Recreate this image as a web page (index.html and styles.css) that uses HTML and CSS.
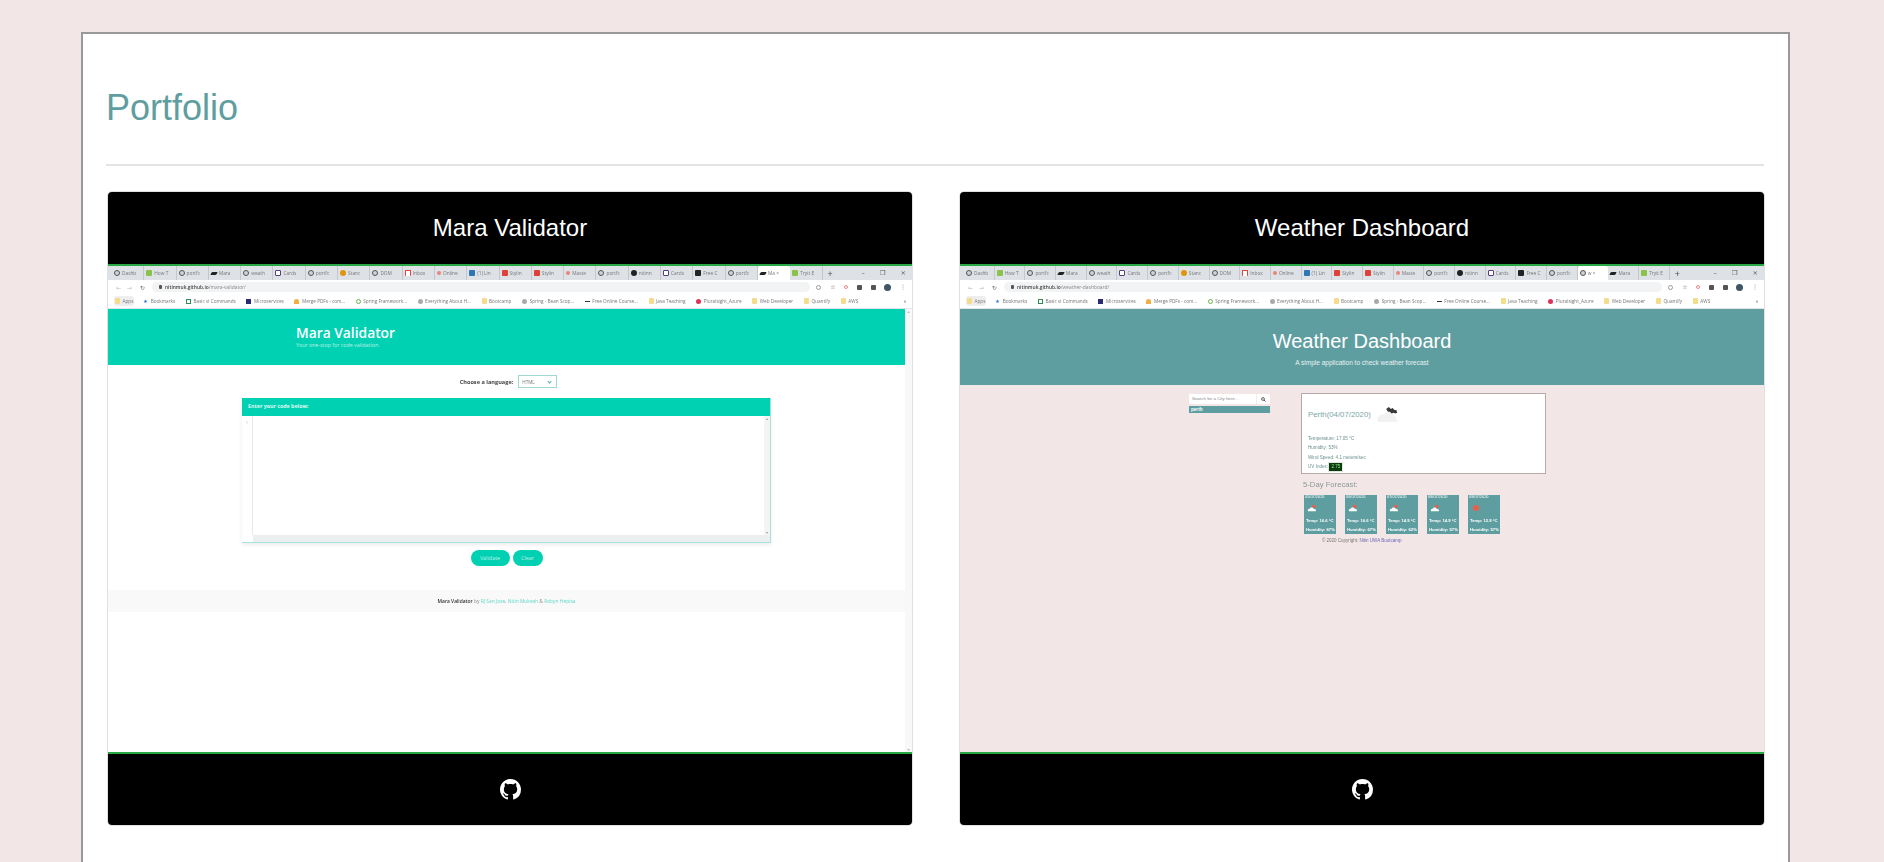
FILE: index.html
```html
<!DOCTYPE html>
<html lang="en">
<head>
<meta charset="utf-8">
<title>Portfolio</title>
<link rel="stylesheet" href="styles.css">
</head>
<body>
<main class="portfolio">
  <h1 class="portfolio-title">Portfolio</h1>
  <hr class="rule">
  <section class="projects">

    <article class="card">
      <header class="card-head"><h2>Mara Validator</h2></header>
      <div class="shot">
        <div class="tabs tabs-mara">
          <span class="tab"><i class="fav globe"></i>Dashb</span><span class="tab"><i class="fav sheet"></i>How T</span><span class="tab"><i class="fav globe"></i>portfc</span><span class="tab"><i class="fav dog"></i>Mara</span><span class="tab"><i class="fav globe"></i>weath</span><span class="tab"><i class="fav cards"></i>Cards</span><span class="tab"><i class="fav globe"></i>portfc</span><span class="tab"><i class="fav stan"></i>Stanc</span><span class="tab"><i class="fav globe"></i>DOM</span><span class="tab"><i class="fav mail"></i>Inbox</span><span class="tab"><i class="fav online"></i>Online</span><span class="tab"><i class="fav linked"></i>(1) Lin</span><span class="tab"><i class="fav red"></i>Stylin</span><span class="tab"><i class="fav red"></i>Stylin</span><span class="tab"><i class="fav online"></i>Maste</span><span class="tab"><i class="fav globe"></i>portfc</span><span class="tab"><i class="fav gh"></i>nitinn</span><span class="tab"><i class="fav cards"></i>Cards</span><span class="tab"><i class="fav free"></i>Free C</span><span class="tab"><i class="fav globe"></i>portfc</span><span class="tab active"><i class="fav dog"></i>Ma ×</span><span class="tab"><i class="fav sheet"></i>Tryit E</span>
          <span class="new-tab">+</span>
          <span class="window-controls"><b>–</b><b>❐</b><b>×</b></span>
        </div>
        <div class="address">
          <span class="nav">←</span><span class="nav">→</span><span class="nav dark">↻</span>
          <span class="omnibox"><i class="lock"></i><strong>nitinmuk.github.io</strong>/mara-validator/</span>
          <span class="tools"><i class="tool-search"></i><i class="tool-star">☆</i><i class="tool-red"></i><i class="tool-ext"></i><i class="tool-ext"></i><i class="avatar"></i><i class="tool-menu">⋮</i></span>
        </div>
        <div class="bookmarks">
          <span class="apps"><i class="mark folder"></i>Apps</span><span><i class="mark star">★</i>Bookmarks</span><span><i class="mark cs"></i>Basic vi Commands</span><span><i class="mark micro"></i>Microservices</span><span><i class="mark pdf"></i>Merge PDFs - com...</span><span><i class="mark spring"></i>Spring Framework...</span><span><i class="mark about"></i>Everything About H...</span><span><i class="mark folder"></i>Bootcamp</span><span><i class="mark about"></i>Spring - Bean Scop...</span><span><i class="mark dash"></i>Free Online Course...</span><span><i class="mark folder"></i>Java Teaching</span><span><i class="mark plural"></i>Pluralsight_Azure</span><span><i class="mark folder"></i>Web Developer</span><span><i class="mark folder"></i>Quantify</span><span><i class="mark folder"></i>AWS</span>
          <span class="more">»</span>
        </div>
        <div class="mara-page">
          <div class="mara-main">
            <div class="mara-hero">
              <p class="mara-name">Mara Validator</p>
              <p class="mara-tag">Your one-stop for code validation.</p>
            </div>
            <div class="lang-row"><label>Choose a language:</label><span class="lang-select">HTML<i class="chev"></i></span></div>
            <div class="editor">
              <div class="editor-head">Enter your code below:</div>
              <div class="editor-body">
                <div class="gutter">1</div>
                <div class="code-area"><div class="code-text"></div><div class="v-scroll"><i>▴</i><i>▾</i></div></div>
              </div>
              <div class="h-scroll"></div>
            </div>
            <div class="actions"><span class="pill pill-validate">Validate</span><span class="pill pill-clear">Clear</span></div>
            <div class="mara-footer"><b>Mara Validator</b> by <a>RJ San Jose</a>, <a>Nitin Mukesh</a> &amp; <a>Robyn Hepisa</a></div>
          </div>
          <div class="page-scroll"><i>▴</i><i>▾</i></div>
        </div>
      </div>
      <footer class="card-foot">
        <svg class="github" viewBox="0 0 16 16" aria-label="GitHub"><path fill="#fff" d="M8 0C3.58 0 0 3.58 0 8c0 3.54 2.29 6.53 5.47 7.59.4.07.55-.17.55-.38 0-.19-.01-.82-.01-1.49-2.01.37-2.53-.49-2.69-.94-.09-.23-.48-.94-.82-1.13-.28-.15-.68-.52-.01-.53.63-.01 1.08.58 1.23.82.72 1.21 1.87.87 2.33.66.07-.52.28-.87.51-1.07-1.78-.2-3.64-.89-3.64-3.95 0-.87.31-1.59.82-2.15-.08-.2-.36-1.02.08-2.12 0 0 .67-.21 2.2.82.64-.18 1.32-.27 2-.27.68 0 1.36.09 2 .27 1.53-1.04 2.2-.82 2.2-.82.44 1.1.16 1.92.08 2.12.51.56.82 1.27.82 2.15 0 3.07-1.87 3.75-3.65 3.95.29.25.54.73.54 1.48 0 1.07-.01 1.93-.01 2.2 0 .21.15.46.55.38A8.013 8.013 0 0016 8c0-4.42-3.58-8-8-8z"/></svg>
      </footer>
    </article>

    <article class="card">
      <header class="card-head"><h2>Weather Dashboard</h2></header>
      <div class="shot">
        <div class="tabs tabs-weather">
          <span class="tab"><i class="fav globe"></i>Dashb</span><span class="tab"><i class="fav sheet"></i>How T</span><span class="tab"><i class="fav globe"></i>portfc</span><span class="tab"><i class="fav dog"></i>Mara</span><span class="tab"><i class="fav globe"></i>weath</span><span class="tab"><i class="fav cards"></i>Cards</span><span class="tab"><i class="fav globe"></i>portfc</span><span class="tab"><i class="fav stan"></i>Stanc</span><span class="tab"><i class="fav globe"></i>DOM</span><span class="tab"><i class="fav mail"></i>Inbox</span><span class="tab"><i class="fav online"></i>Online</span><span class="tab"><i class="fav linked"></i>(1) Lin</span><span class="tab"><i class="fav red"></i>Stylin</span><span class="tab"><i class="fav red"></i>Stylin</span><span class="tab"><i class="fav online"></i>Maste</span><span class="tab"><i class="fav globe"></i>portfc</span><span class="tab"><i class="fav gh"></i>nitinn</span><span class="tab"><i class="fav cards"></i>Cards</span><span class="tab"><i class="fav free"></i>Free C</span><span class="tab"><i class="fav globe"></i>portfc</span><span class="tab active"><i class="fav globe"></i>w ×</span><span class="tab"><i class="fav dog"></i>Mara</span><span class="tab"><i class="fav sheet"></i>Tryit E</span>
          <span class="new-tab">+</span>
          <span class="window-controls"><b>–</b><b>❐</b><b>×</b></span>
        </div>
        <div class="address">
          <span class="nav">←</span><span class="nav">→</span><span class="nav dark">↻</span>
          <span class="omnibox"><i class="lock"></i><strong>nitinmuk.github.io</strong>/weather-dashboard/</span>
          <span class="tools"><i class="tool-search"></i><i class="tool-star">☆</i><i class="tool-red"></i><i class="tool-ext"></i><i class="tool-ext"></i><i class="avatar"></i><i class="tool-menu">⋮</i></span>
        </div>
        <div class="bookmarks">
          <span class="apps"><i class="mark folder"></i>Apps</span><span><i class="mark star">★</i>Bookmarks</span><span><i class="mark cs"></i>Basic vi Commands</span><span><i class="mark micro"></i>Microservices</span><span><i class="mark pdf"></i>Merge PDFs - com...</span><span><i class="mark spring"></i>Spring Framework...</span><span><i class="mark about"></i>Everything About H...</span><span><i class="mark folder"></i>Bootcamp</span><span><i class="mark about"></i>Spring - Bean Scop...</span><span><i class="mark dash"></i>Free Online Course...</span><span><i class="mark folder"></i>Java Teaching</span><span><i class="mark plural"></i>Pluralsight_Azure</span><span><i class="mark folder"></i>Web Developer</span><span><i class="mark folder"></i>Quantify</span><span><i class="mark folder"></i>AWS</span>
          <span class="more">»</span>
        </div>
        <div class="weather-page">
          <div class="weather-hero">
            <p class="weather-name">Weather Dashboard</p>
            <p class="weather-tag">A simple application to check weather forecast</p>
          </div>
          <div class="weather-body">
            <aside class="weather-side">
              <div class="search"><span class="search-input">Search for a City here...</span><span class="search-btn"><svg viewBox="0 0 10 10"><circle cx="4" cy="4" r="2.8" fill="none" stroke="#333" stroke-width="1.5"/><path d="M6 6l3 3" stroke="#333" stroke-width="1.7"/></svg></span></div>
              <div class="city">perth</div>
            </aside>
            <div class="weather-main">
              <div class="today">
                <div class="today-title"><span>Perth(04/07/2020)</span>
                  <svg class="today-icon" viewBox="0 0 26 18"><path fill="#f2f2f2" d="M2 17c-2-5 3-9 7-8 2-4 9-4 12 3l3 5z"/><path fill="#3a3a3a" d="M11 3l3-2 2 2 2-1 2 2 2 0 1 3-2 1-2-1-2 1-2-2-2 0z"/></svg>
                </div>
                <p>Temperature: 17.05 °C</p>
                <p>Humidity: 53%</p>
                <p>Wind Speed: 4.1 meters/sec</p>
                <p>UV Index: <span class="uv">2.75</span></p>
              </div>
              <h3 class="forecast-title">5-Day Forecast:</h3>
              <div class="forecast">
                <div class="day"><span class="date">05/07/2020</span><svg class="day-icon" viewBox="0 0 12 10"><circle cx="8" cy="3" r="2.2" fill="#e8604c"/><path fill="#fff" d="M1 9c-1-2 1-3 2-3 1-2 4-2 5 0 2 0 3 1 3 3z"/></svg><span class="stat">Temp: 16.6 °C</span><span class="stat">Humidity: 67%</span></div>
                <div class="day"><span class="date">06/07/2020</span><svg class="day-icon" viewBox="0 0 12 10"><circle cx="8" cy="3" r="2.2" fill="#e8604c"/><path fill="#fff" d="M1 9c-1-2 1-3 2-3 1-2 4-2 5 0 2 0 3 1 3 3z"/></svg><span class="stat">Temp: 16.6 °C</span><span class="stat">Humidity: 67%</span></div>
                <div class="day"><span class="date">07/07/2020</span><svg class="day-icon" viewBox="0 0 12 10"><circle cx="8" cy="3" r="2.2" fill="#e8604c"/><path fill="#fff" d="M1 9c-1-2 1-3 2-3 1-2 4-2 5 0 2 0 3 1 3 3z"/></svg><span class="stat">Temp: 14.9 °C</span><span class="stat">Humidity: 62%</span></div>
                <div class="day"><span class="date">08/07/2020</span><svg class="day-icon" viewBox="0 0 12 10"><circle cx="8" cy="3" r="2.2" fill="#e8604c"/><path fill="#fff" d="M1 9c-1-2 1-3 2-3 1-2 4-2 5 0 2 0 3 1 3 3z"/></svg><span class="stat">Temp: 14.9 °C</span><span class="stat">Humidity: 57%</span></div>
                <div class="day"><span class="date">09/07/2020</span><svg class="day-icon" viewBox="0 0 12 10"><circle cx="6" cy="5" r="3.8" fill="#e8604c"/></svg><span class="stat">Temp: 12.9 °C</span><span class="stat">Humidity: 57%</span></div>
              </div>
              <p class="copyright">© 2020 Copyright: <a>Nitin UWA Bootcamp</a></p>
            </div>
          </div>
        </div>
      </div>
      <footer class="card-foot">
        <svg class="github" viewBox="0 0 16 16" aria-label="GitHub"><path fill="#fff" d="M8 0C3.58 0 0 3.58 0 8c0 3.54 2.29 6.53 5.47 7.59.4.07.55-.17.55-.38 0-.19-.01-.82-.01-1.49-2.01.37-2.53-.49-2.69-.94-.09-.23-.48-.94-.82-1.13-.28-.15-.68-.52-.01-.53.63-.01 1.08.58 1.23.82.72 1.21 1.87.87 2.33.66.07-.52.28-.87.51-1.07-1.78-.2-3.64-.89-3.64-3.95 0-.87.31-1.59.82-2.15-.08-.2-.36-1.02.08-2.12 0 0 .67-.21 2.2.82.64-.18 1.32-.27 2-.27.68 0 1.36.09 2 .27 1.53-1.04 2.2-.82 2.2-.82.44 1.1.16 1.92.08 2.12.51.56.82 1.27.82 2.15 0 3.07-1.87 3.75-3.65 3.95.29.25.54.73.54 1.48 0 1.07-.01 1.93-.01 2.2 0 .21.15.46.55.38A8.013 8.013 0 0016 8c0-4.42-3.58-8-8-8z"/></svg>
      </footer>
    </article>

  </section>
</main>
</body>
</html>
```

FILE: styles.css
```css
* { box-sizing: border-box; }
html, body { margin: 0; height: 862px; overflow: hidden; }
body { background: #f3e6e6; font-family: "Liberation Sans", Arial, sans-serif; }
p, h1, h2, h3 { margin: 0; font-weight: 400; }
i { font-style: normal; }

.portfolio { margin: 32px 94px 0 81px; background: #fff; border: 2px solid #999; padding: 50px 24px 48px 23px; }
.portfolio-title { font-size: 36px; line-height: 48px; color: #5f9ea0; }
.rule { border: 0; border-top: 2px solid #e4e4e4; margin: 32px 0 25px 0; }
.projects { display: grid; grid-template-columns: 806px 806px; column-gap: 46px; margin-left: 1px; }

.card { border: 1px solid #e0e0e0; border-radius: 5px; overflow: hidden; display: flex; flex-direction: column; background: #fff; }
.card-head { height: 72px; background: #000; display: flex; align-items: center; justify-content: center; }
.card-head h2 { color: #fff; font-size: 24px; line-height: 28px; }
.card-foot { height: 73px; background: #000; border-top: 2px solid #28a745; display: flex; align-items: center; justify-content: center; }
.github { width: 21px; height: 21px; display: block; }

.shot { height: 488px; display: flex; flex-direction: column; overflow: hidden; border-top: 2px solid #28a745; font-family: "Open Sans", "Liberation Sans", sans-serif; }

.tabs { height: 14px; background: #dee1e6; display: flex; align-items: center; font-size: 4.8px; color: #777; padding-left: 4px; flex: none; filter: blur(.35px); }
.tab { display: flex; align-items: center; gap: 2px; height: 100%; padding-left: 2px; white-space: nowrap; overflow: hidden; border-right: 1px solid #c4c7cc; flex: none; }
.tabs-mara .tab { width: 32.3px; }
.tabs-weather .tab { width: 30.7px; }
.tab.active { background: #fff; border-radius: 3px 3px 0 0; border-right: 0; }
.new-tab { font-size: 9px; color: #444; margin-left: 5px; line-height: 1; }
.window-controls { margin-left: auto; display: flex; gap: 15px; padding-right: 6px; }
.window-controls b { font-weight: 400; font-size: 6.5px; color: #555; font-family: "DejaVu Sans", sans-serif; }

.fav { width: 6px; height: 6px; display: block; flex: none; border-radius: 1px; }
.globe { border-radius: 50%; border: 1.6px solid #555; background: #cfd2d6; }
.sheet { background: #8bc34a; }
.dog { background: #222; height: 3px; transform: skewX(-30deg); }
.cards { background: #fff; border: 1.6px solid #563d7c; }
.stan { background: #e0960c; border-radius: 50%; }
.mail { background: #fff; border-left: 1.5px solid #d8453a; border-right: 1.5px solid #d8453a; border-top: 1.5px solid #d8453a; }
.online { background: #e8867a; width: 4px; height: 4px; border-radius: 50%; }
.linked { background: #2e77b5; }
.red { background: #e0403a; }
.gh { background: #222; border-radius: 50%; }
.free { background: #222; }

.address { height: 14px; background: #fff; display: flex; align-items: center; padding-left: 5px; flex: none; filter: blur(.35px); }
.nav { width: 11px; text-align: center; font-size: 6px; color: #bbb; font-family: "DejaVu Sans", sans-serif; }
.nav.dark { color: #666; width: 15px; }
.omnibox { flex: 1; height: 10px; background: #f1f3f4; border-radius: 5px; margin-left: 2px; padding-left: 7px; display: flex; align-items: center; gap: 3px; font-size: 4.9px; color: #888; white-space: nowrap; }
.omnibox strong { font-weight: 600; color: #444; margin-right: -3px; }
.lock { width: 3px; height: 4px; background: #555; border-radius: 1px; }
.tools { display: flex; align-items: center; gap: 8.7px; padding: 0 6px; width: 102px; justify-content: flex-end; flex: none; }
.tools i { display: block; flex: none; }
.tool-search { width: 5px; height: 5px; border: 1px solid #999; border-radius: 50%; }
.tool-star { font-size: 6px; color: #666; font-family: "DejaVu Sans", sans-serif; line-height: 1; }
.tool-red { width: 4px; height: 4px; border: 1px solid #e88; border-radius: 50%; }
.tool-ext { width: 5px; height: 5px; background: #555; border-radius: 1px; }
.avatar { width: 7px; height: 7px; background: #3f5666; border-radius: 50%; }
.tool-menu { font-size: 6px; color: #666; line-height: 1; font-family: "DejaVu Sans", sans-serif; }

.bookmarks { height: 15px; background: #fff; border-bottom: 1px solid #e2e4e6; display: flex; align-items: center; gap: 10.7px; padding-left: 6px; font-size: 4.7px; color: #777; white-space: nowrap; flex: none; filter: blur(.35px); }
.bookmarks > span { display: flex; align-items: center; gap: 2.5px; }
.bookmarks .apps { background: #eee; border-radius: 3px; padding: 2px 1px; margin-right: -2px; }
.bookmarks .more { margin-left: auto; padding-right: 6px; color: #444; }
.mark { width: 5px; height: 5px; display: block; flex: none; font-style: normal; line-height: 5px; font-size: 5px; }
.folder { background: #f5dc8c; border-radius: 1px; height: 6px; }
.star { color: #2a6fd0; font-family: "DejaVu Sans", sans-serif; }
.cs { border: 1px solid #2e8b57; }
.micro { background: #2b2a6e; }
.pdf { background: #f0b040; border-radius: 50% 50% 0 0; }
.spring { background: #fff; border: 1px solid #6ab04c; border-radius: 50%; }
.about { background: #aaa; border-radius: 50%; }
.dash { background: #333; height: 1px; }
.plural { background: #e0305a; border-radius: 50%; }

.mara-page { flex: 1; display: flex; min-height: 0; background: #fff; }
.mara-main { flex: 1; display: flex; flex-direction: column; font-family: "Open Sans", sans-serif; }
.page-scroll { width: 7px; background: #f8f8f8; flex: none; display: flex; flex-direction: column; justify-content: space-between; align-items: center; font-size: 4px; color: #aaa; font-family: "DejaVu Sans", sans-serif; }
.mara-hero { height: 56px; background: #00d1b2; padding: 15px 0 0 188px; color: #fff; flex: none; }
.mara-name { font-size: 13.8px; line-height: 18px; font-weight: 600; font-family: "Open Sans", sans-serif; }
.mara-tag { font-size: 5.3px; line-height: 7px; color: #bff3ea; }
.lang-row { display: flex; align-items: center; justify-content: center; gap: 5px; height: 13px; margin: 10px 0 10px 0; padding-left: 4px; font-size: 5.6px; color: #444; font-weight: 700; flex: none; filter: blur(.3px); }
.lang-select { width: 39px; height: 13px; border: 1px solid #9fd8d0; display: flex; align-items: center; justify-content: space-between; padding: 0 5px 0 3px; font-size: 4.6px; font-weight: 400; color: #777; }
.chev { width: 3px; height: 3px; border-right: 1px solid #5aa; border-bottom: 1px solid #5aa; transform: rotate(45deg); display: block; }
.editor { width: 529px; height: 145px; margin-left: 134px; border-bottom: 1px solid #a8e4dc; border-right: 1px solid #a8e4dc; box-shadow: 0 2px 4px rgba(0,0,0,.08); display: flex; flex-direction: column; flex: none; background: #fff; }
.editor-head { height: 18px; background: #00d1b2; color: #dffaf4; font-size: 5.3px; font-weight: 700; line-height: 17px; padding-left: 6px; flex: none; }
.editor-body { flex: 1; display: flex; min-height: 0; }
.gutter { width: 11px; border-right: 1px solid #e8e8e8; font-size: 4px; color: #aaa; text-align: center; padding-top: 4px; flex: none; }
.code-area { flex: 1; display: flex; }
.code-text { flex: 1; }
.v-scroll { width: 6px; background: #f3f5f5; display: flex; flex-direction: column; justify-content: space-between; align-items: center; font-size: 4px; color: #999; font-family: "DejaVu Sans", sans-serif; }
.h-scroll { height: 7px; margin-left: 11px; background: #ecefef; flex: none; }
.actions { display: flex; gap: 3px; justify-content: center; margin: 7px 0 0 0; flex: none; }
.pill { height: 16px; border-radius: 8px; background: #00d1b2; color: #bff3ea; font-size: 5.4px; line-height: 16px; text-align: center; }
.pill-validate { width: 39px; }
.pill-clear { width: 30px; }
.mara-footer { margin-top: 24px; height: 22px; background: #f9f9f9; text-align: center; font-size: 4.9px; line-height: 22px; color: #888; flex: none; filter: blur(.3px); }
.mara-footer b { color: #333; font-weight: 600; }
.mara-footer a { color: #62d8c8; }

.weather-page { flex: 1; background: #f3e6e6; display: flex; flex-direction: column; min-height: 0; font-family: "Liberation Sans", sans-serif; }
.weather-hero { height: 76px; background: #5f9ea0; text-align: center; color: #fff; padding-top: 20px; flex: none; }
.weather-name { font-size: 20px; line-height: 24px; }
.weather-tag { font-size: 6.5px; line-height: 8px; margin-top: 6px; color: #e8f2f2; }
.weather-body { display: flex; padding: 8px 0 0 229px; gap: 31px; }
.weather-side { width: 81px; flex: none; padding-top: 1px; }
.search { height: 10px; display: flex; background: #fff; }
.search-input { flex: 1; font-size: 4.4px; line-height: 10px; color: #888; padding-left: 3px; border-right: 1px solid #eee; }
.search-btn { width: 13px; display: flex; align-items: center; justify-content: center; }
.search-btn svg { width: 5px; height: 5px; }
.city { margin-top: 2px; height: 7px; background: #5f9ea0; color: #fff; font-size: 4.6px; line-height: 7px; font-weight: 700; padding-left: 2px; }
.weather-main { width: 245px; flex: none; filter: blur(.25px); }
.today { height: 81px; background: #fff; border: 1.5px solid #b9a9a9; padding: 9px 6px 0 6px; color: #5f8f90; }
.today-title { display: flex; align-items: center; gap: 5px; height: 22px; font-size: 7.8px; color: #7aa6a8; }
.today-icon { width: 24px; height: 17px; flex: none; }
.today p { font-size: 4.6px; line-height: 9.4px; color: #6d8f90; }
.today-title + p { margin-top: 9px; }
.uv { display: inline-block; background: #0c3b0c; color: #8fe88f; font-size: 4.6px; line-height: 8px; padding: 0 2px; outline: 1px solid #dfe8df; }
.forecast-title { font-size: 7.7px; line-height: 12px; color: #8a9a9a; margin: 5px 0 0 2px; }
.forecast { display: flex; gap: 9px; margin: 4px 0 0 3px; }
.day { width: 32px; height: 39px; background: #5f9ea0; color: #fff; font-size: 4px; padding: 0 1px; display: flex; flex-direction: column; flex: none; }
.date { line-height: 4px; font-size: 3.9px; }
.day-icon { width: 10px; height: 8px; margin: 5px 0 0 2px; flex: none; }
.stat { font-size: 4.2px; line-height: 9px; font-weight: 700; padding-left: 1px; white-space: nowrap; }
.day-icon + .stat { margin-top: 4px; }
.copyright { font-size: 4.5px; line-height: 6px; color: #777; margin: 4px 0 0 21px; }
.copyright a { color: #6a6ab8; }
```
